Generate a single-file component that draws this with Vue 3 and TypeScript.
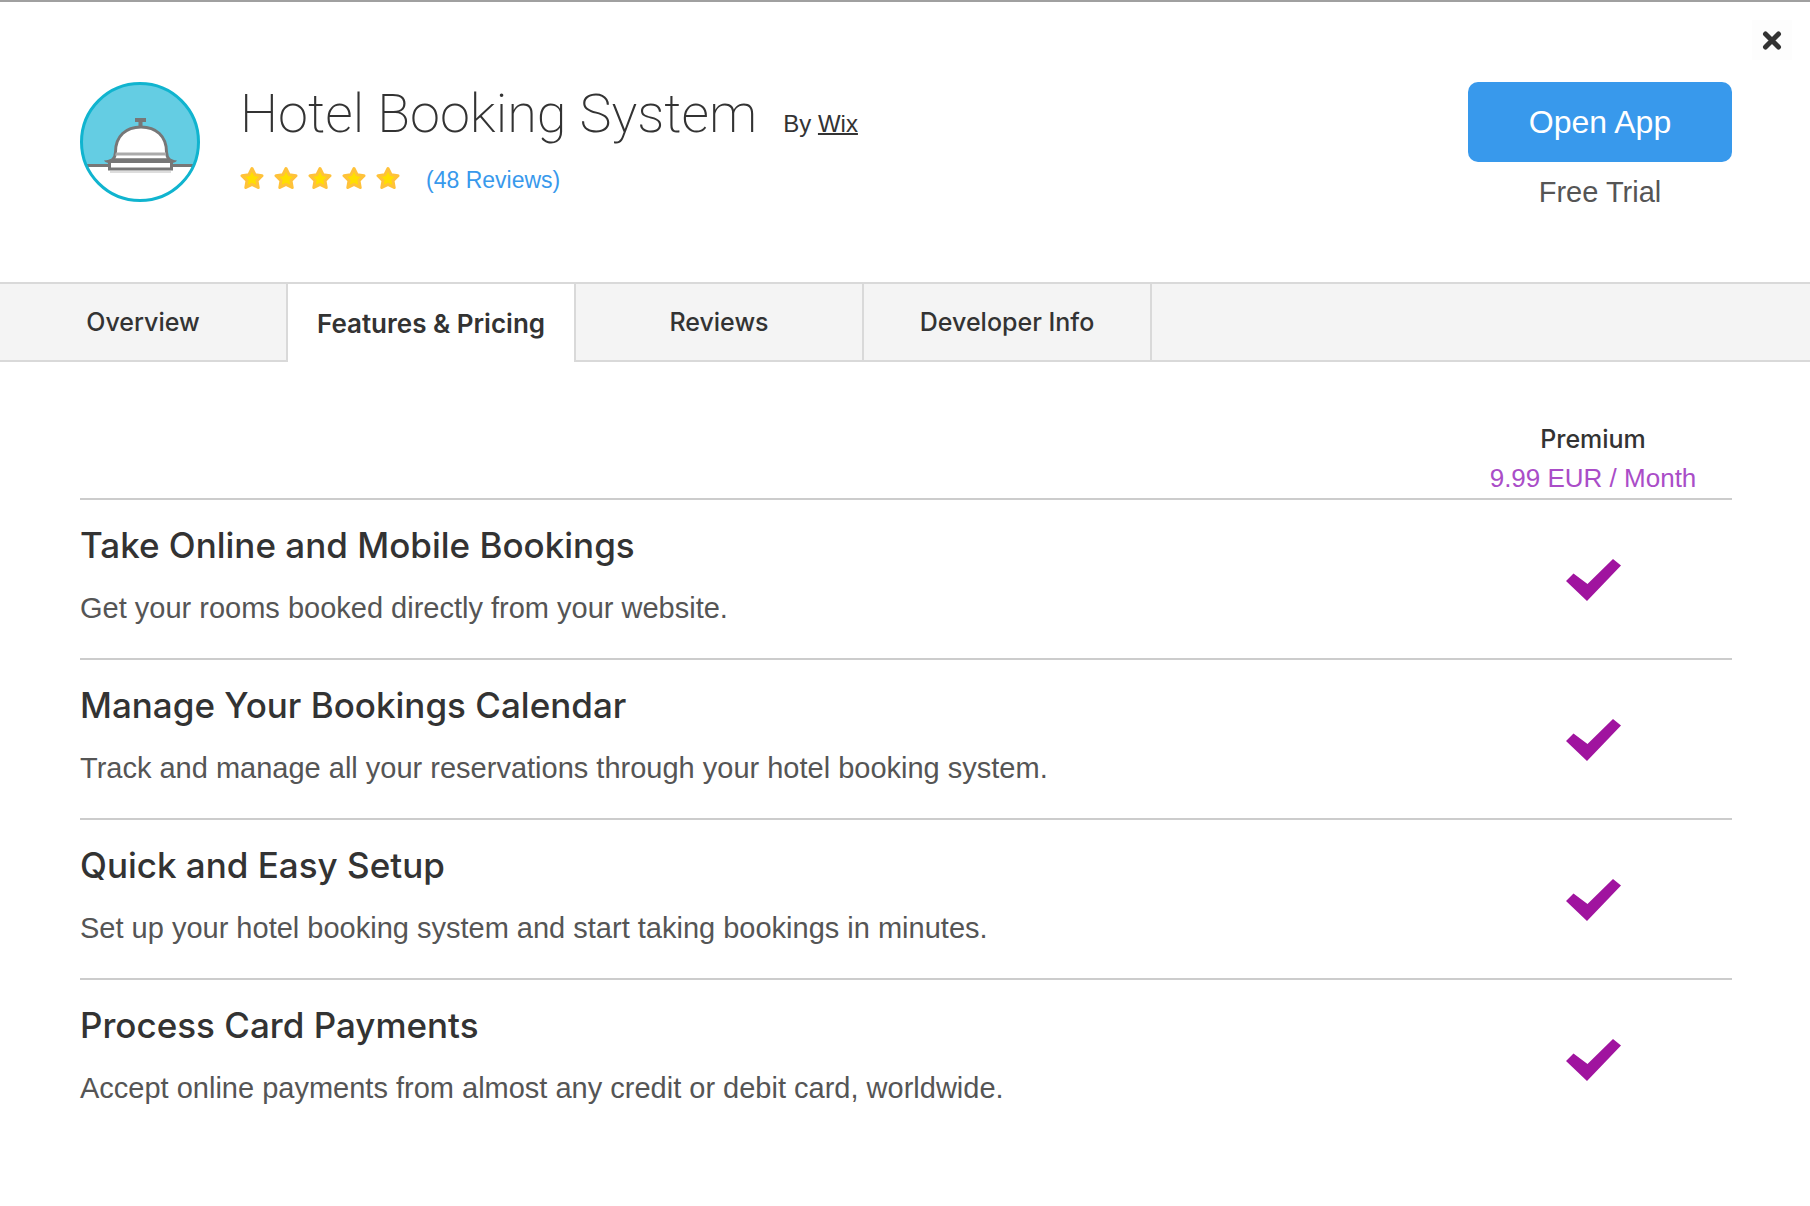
<script setup lang="ts">
import { ref } from 'vue'

interface Feature {
  title: string
  description: string
}

const tabs: string[] = ['Overview', 'Features & Pricing', 'Reviews', 'Developer Info']
const activeTab = ref('Features & Pricing')

const rating = 5

const features: Feature[] = [
  {
    title: 'Take Online and Mobile Bookings',
    description: 'Get your rooms booked directly from your website.',
  },
  {
    title: 'Manage Your Bookings Calendar',
    description: 'Track and manage all your reservations through your hotel booking system.',
  },
  {
    title: 'Quick and Easy Setup',
    description: 'Set up your hotel booking system and start taking bookings in minutes.',
  },
  {
    title: 'Process Card Payments',
    description: 'Accept online payments from almost any credit or debit card, worldwide.',
  },
]
</script>

<template>
  <div class="dialog">
    <button class="close" type="button" aria-label="Close">
      <svg width="20" height="20" viewBox="0 0 20 20" aria-hidden="true">
        <path d="M3.500 4 16.500 17M16.500 4 3.500 17" stroke="#333" stroke-width="5" stroke-linecap="round" />
      </svg>
    </button>

    <header class="header">
      <svg class="logo" width="120" height="120" viewBox="0 0 120 120" aria-hidden="true">
        <defs>
          <clipPath id="disc"><circle cx="60" cy="60" r="58" /></clipPath>
        </defs>
        <g clip-path="url(#disc)">
          <rect width="120" height="120" fill="#fff" />
          <rect width="120" height="83" fill="#64cde3" />
          <rect y="82" width="120" height="3" fill="#777" />
        </g>
        <circle cx="60" cy="60" r="58.5" fill="none" stroke="#10b4cf" stroke-width="3" />
        <path d="M55 36h11v4h-3.500v5h-4v-5H55z" fill="#777" />
        <path
          d="M35.500 70C35.500 54 46 45 61 45s25.500 9 25.500 25c0 3 1 5.500 3 8h-57c2-2.500 3-5 3-8z"
          fill="#fff"
          stroke="#777"
          stroke-width="3"
        />
        <path d="M36 70.500h50v3H35z" fill="#aaa" />
        <path d="M24 78.500c3.500 0 6-1.500 8-2h58c2 .5 4 2 7 2-1 1.500-3 2-4 2.500H28c-1.500-.5-3-1-4-2.500z" fill="#777" />
        <rect x="29.500" y="79.500" width="62" height="7.500" fill="#fff" stroke="#777" stroke-width="3" />
        <path d="M30 90h61" stroke="#ddd" stroke-width="2" />
      </svg>

      <div class="summary">
        <div class="title-line">
          <h1>Hotel Booking System</h1>
          <p class="author">By <a href="#">Wix</a></p>
        </div>
        <div class="rating">
          <span class="stars" role="img" aria-label="5 out of 5 stars">
            <svg v-for="n in rating" :key="n" width="24" height="26" viewBox="0 0 24 26" aria-hidden="true">
              <path
                d="M12 2.500l3.100 6.200 6.900 1-5 4.900 1.200 6.900-6.200-3.200-6.200 3.200L7 14.600 2 9.700l6.900-1z"
                fill="#ffdf00"
                stroke="#ffc23a"
                stroke-width="3"
                stroke-linejoin="round"
              />
            </svg>
          </span>
          <a class="review-count" href="#">(48 Reviews)</a>
        </div>
      </div>

      <div class="action">
        <button class="open" type="button">Open App</button>
        <p class="trial">Free Trial</p>
      </div>
    </header>

    <nav class="tabs">
      <button
        v-for="tab in tabs"
        :key="tab"
        type="button"
        class="tab"
        :class="{ active: tab === activeTab }"
        @click="activeTab = tab"
      >
        {{ tab }}
      </button>
      <span class="tabs-rest"></span>
    </nav>

    <main class="content">
      <table class="plans">
        <thead>
          <tr>
            <td></td>
            <th class="plan" scope="col">
              <span class="plan-name">Premium</span>
              <span class="plan-price">9.99 EUR / Month</span>
            </th>
          </tr>
        </thead>
        <tbody>
          <tr v-for="feature in features" :key="feature.title">
            <th class="feature" scope="row">
              <h2>{{ feature.title }}</h2>
              <p>{{ feature.description }}</p>
            </th>
            <td class="included">
              <svg width="55" height="42" viewBox="0 0 55 42" role="img" aria-label="Included">
                <path d="M0 22 7.500 14.500 21.500 25 47 0 55 6.500 21 42z" fill="#a0149f" />
              </svg>
            </td>
          </tr>
        </tbody>
      </table>
    </main>
  </div>
</template>

<style>
body {
  margin: 0;
  background: #fff;
}
</style>

<style scoped>
.dialog {
  position: relative;
  border-top: 2px solid #a0a0a0;
  color: #333;
  font-family: "Liberation Sans", Arial, sans-serif;
}

h1,
h2,
p {
  margin: 0;
}

button {
  border: 0;
  padding: 0;
  cursor: pointer;
}

.close {
  position: absolute;
  top: 18px;
  right: 18px;
  display: flex;
  align-items: center;
  justify-content: center;
  width: 40px;
  height: 40px;
  background: #fdfdfd;
}

.header {
  display: flex;
  align-items: flex-start;
  gap: 40px;
  padding: 80px 78px 72px 80px;
}

.logo {
  flex: none;
}

.summary {
  flex: 1;
}

.title-line {
  display: flex;
  align-items: baseline;
  gap: 26px;
}

h1 {
  font: 200 54px/64px Roboto, sans-serif;
}

.author {
  font-size: 24px;
  line-height: 28px;
}

.author a {
  color: inherit;
  text-decoration-thickness: 2px;
  text-underline-offset: 1px;
  text-decoration-skip-ink: none;
}

.rating {
  display: flex;
  align-items: center;
  gap: 26px;
  margin-top: 20px;
}

.stars {
  display: flex;
  gap: 10px;
  height: 28px;
}

.review-count {
  color: #3899ec;
  font-size: 23px;
  line-height: 28px;
  text-decoration: none;
}

.action {
  width: 264px;
  text-align: center;
}

.open {
  width: 100%;
  height: 80px;
  border-radius: 10px;
  background: #3899ec;
  color: #fff;
  font: 32px "Liberation Sans", Arial, sans-serif;
}

.trial {
  margin-top: 12px;
  color: #555;
  font-size: 29px;
  line-height: 36px;
}

.tabs {
  display: flex;
  height: 78px;
  border-top: 2px solid #d9d9d9;
}

.tab {
  box-sizing: border-box;
  width: 288px;
  border-right: 2px solid #d9d9d9;
  border-bottom: 2px solid #d9d9d9;
  background: #f4f4f4;
  color: #333;
  font: 500 25px Inter, sans-serif;
}

.tab.active {
  border-bottom: 0;
  background: #fff;
  font-size: 26px;
  font-weight: 600;
}

.tabs-rest {
  flex: 1;
  border-bottom: 2px solid #d9d9d9;
  background: #f4f4f4;
}

.content {
  padding: 58px 78px 80px 80px;
}

.plans {
  width: 100%;
  border-collapse: separate;
  border-spacing: 0;
}

.plans th,
.plans td {
  padding: 0;
  border-bottom: 2px solid #ccc;
  font-weight: 400;
}

.plans tbody tr:last-child > * {
  border-bottom: 0;
}

.plan {
  width: 278px;
}

.plan-name,
.plan-price {
  display: block;
  line-height: 39px;
}

.plan-name {
  font-family: Inter, sans-serif;
  font-size: 25px;
  font-weight: 500;
}

.plan-price {
  color: #aa4dc8;
  font-size: 26px;
}

.plans .feature {
  padding: 24px 0 32px;
  text-align: left;
}

.feature h2 {
  font: 500 35px/42px Inter, sans-serif;
}

.feature p {
  margin-top: 24px;
  color: #555;
  font-size: 29px;
  line-height: 36px;
}

.plans .included {
  padding-top: 2px;
  text-align: center;
  vertical-align: middle;
}

.included svg {
  display: block;
  margin: 0 auto;
}
</style>
